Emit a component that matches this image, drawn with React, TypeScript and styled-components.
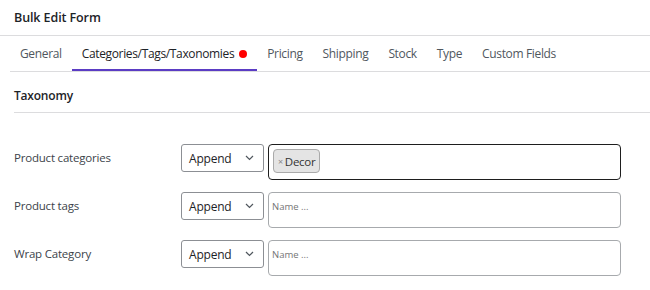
import React from "react";
import styled, { createGlobalStyle } from "styled-components";

const GlobalStyle = createGlobalStyle`
  html, body { margin: 0; padding: 0; background: #fff; }
  body { font-family: "Open Sans", "Noto Sans", sans-serif; color: #1d2327; }
  * { box-sizing: border-box; }
`;

const Page = styled.div`
  width: 650px;
  height: 290px;
  overflow: hidden;
  background: #fff;
`;

const Header = styled.div`
  height: 36px;
  padding: 0 14px;
  display: flex;
  align-items: center;
  border-bottom: 1px solid #dcdcde;
`;

const Title = styled.h1`
  margin: 0;
  font-size: 12.5px;
  font-weight: 600;
  color: #1d2327;
  letter-spacing: -0.1px;
`;

const TabBar = styled.div`
  margin-left: 10px;
  display: flex;
  height: 36px;
  border-bottom: 1px solid #dcdcde;
`;

const Tab = styled.div<{ $active?: boolean }>`
  padding: 0 10px;
  display: flex;
  align-items: center;
  font-size: 12px;
  letter-spacing: -0.35px;
  color: ${(p) => (p.$active ? "#1d2327" : "#50575e")};
  border-bottom: 2px solid ${(p) => (p.$active ? "#5b3cc4" : "transparent")};
  padding-top: 2px;
`;

const Dot = styled.span`
  display: inline-block;
  width: 8px;
  height: 8px;
  border-radius: 50%;
  background: #f00;
  margin-left: 5px;
`;

const Section = styled.div`
  margin-left: 14px;
  height: 41px;
  padding-top: 15px;
  border-bottom: 1px solid #dcdcde;
  font-size: 12px;
  font-weight: 600;
  letter-spacing: -0.2px;
  color: #1d2327;
`;

const Form = styled.div`
  padding: 31px 0 0 14px;
  display: flex;
  flex-direction: column;
  gap: 12px;
`;

const Row = styled.div`
  display: flex;
  align-items: flex-start;
`;

const Label = styled.div`
  width: 167px;
  line-height: 28px;
  font-size: 11.5px;
  letter-spacing: -0.2px;
  color: #3c434a;
`;

const Select = styled.div`
  width: 83px;
  height: 28px;
  border: 1px solid #8c8f94;
  border-radius: 3px;
  display: flex;
  align-items: center;
  justify-content: space-between;
  padding: 0 9px 0 7px;
  font-size: 12px;
  letter-spacing: -0.2px;
  color: #1d2327;
  margin-right: 4px;
`;

const Field = styled.div<{ $focused?: boolean }>`
  width: 353px;
  height: 36px;
  border-radius: 4px;
  border: ${(p) => (p.$focused ? "1.5px solid #1e1e1e" : "1px solid #a7aaad")};
  padding: ${(p) => (p.$focused ? "4px 4px" : "7px 3px")};
  display: flex;
  align-items: flex-start;
`;

const Placeholder = styled.span`
  font-size: 9.5px;
  color: #757575;
  line-height: 14px;
`;

const Chip = styled.span`
  display: inline-flex;
  align-items: center;
  height: 24px;
  padding: 0 4px;
  border: 1px solid #aaa;
  border-radius: 4px;
  background: #e4e4e4;
  font-size: 11.5px;
  letter-spacing: -0.3px;
  color: #333;
`;

const ChipX = styled.span`
  font-size: 9px;
  color: #888;
  margin-right: 2px;
`;

const Chevron = () => (
  <svg width="9" height="6" viewBox="0 0 9 6" fill="none">
    <path d="M1 1l3.5 3.5L8 1" stroke="#50575e" strokeWidth="1.2" />
  </svg>
);

const tabs = ["General", "Categories/Tags/Taxonomies", "Pricing", "Shipping", "Stock", "Type", "Custom Fields"];

export default function App() {
  return (
    <Page>
      <GlobalStyle />
      <Header>
        <Title>Bulk Edit Form</Title>
      </Header>
      <TabBar>
        {tabs.map((t, i) => (
          <Tab key={t} $active={i === 1}>
            {t}
            {i === 1 && <Dot />}
          </Tab>
        ))}
      </TabBar>
      <Section>Taxonomy</Section>
      <Form>
        <Row>
          <Label>Product categories</Label>
          <Select>
            Append <Chevron />
          </Select>
          <Field $focused>
            <Chip>
              <ChipX>×</ChipX>Decor
            </Chip>
          </Field>
        </Row>
        <Row>
          <Label>Product tags</Label>
          <Select>
            Append <Chevron />
          </Select>
          <Field>
            <Placeholder>Name ...</Placeholder>
          </Field>
        </Row>
        <Row>
          <Label>Wrap Category</Label>
          <Select>
            Append <Chevron />
          </Select>
          <Field>
            <Placeholder>Name ...</Placeholder>
          </Field>
        </Row>
      </Form>
    </Page>
  );
}
